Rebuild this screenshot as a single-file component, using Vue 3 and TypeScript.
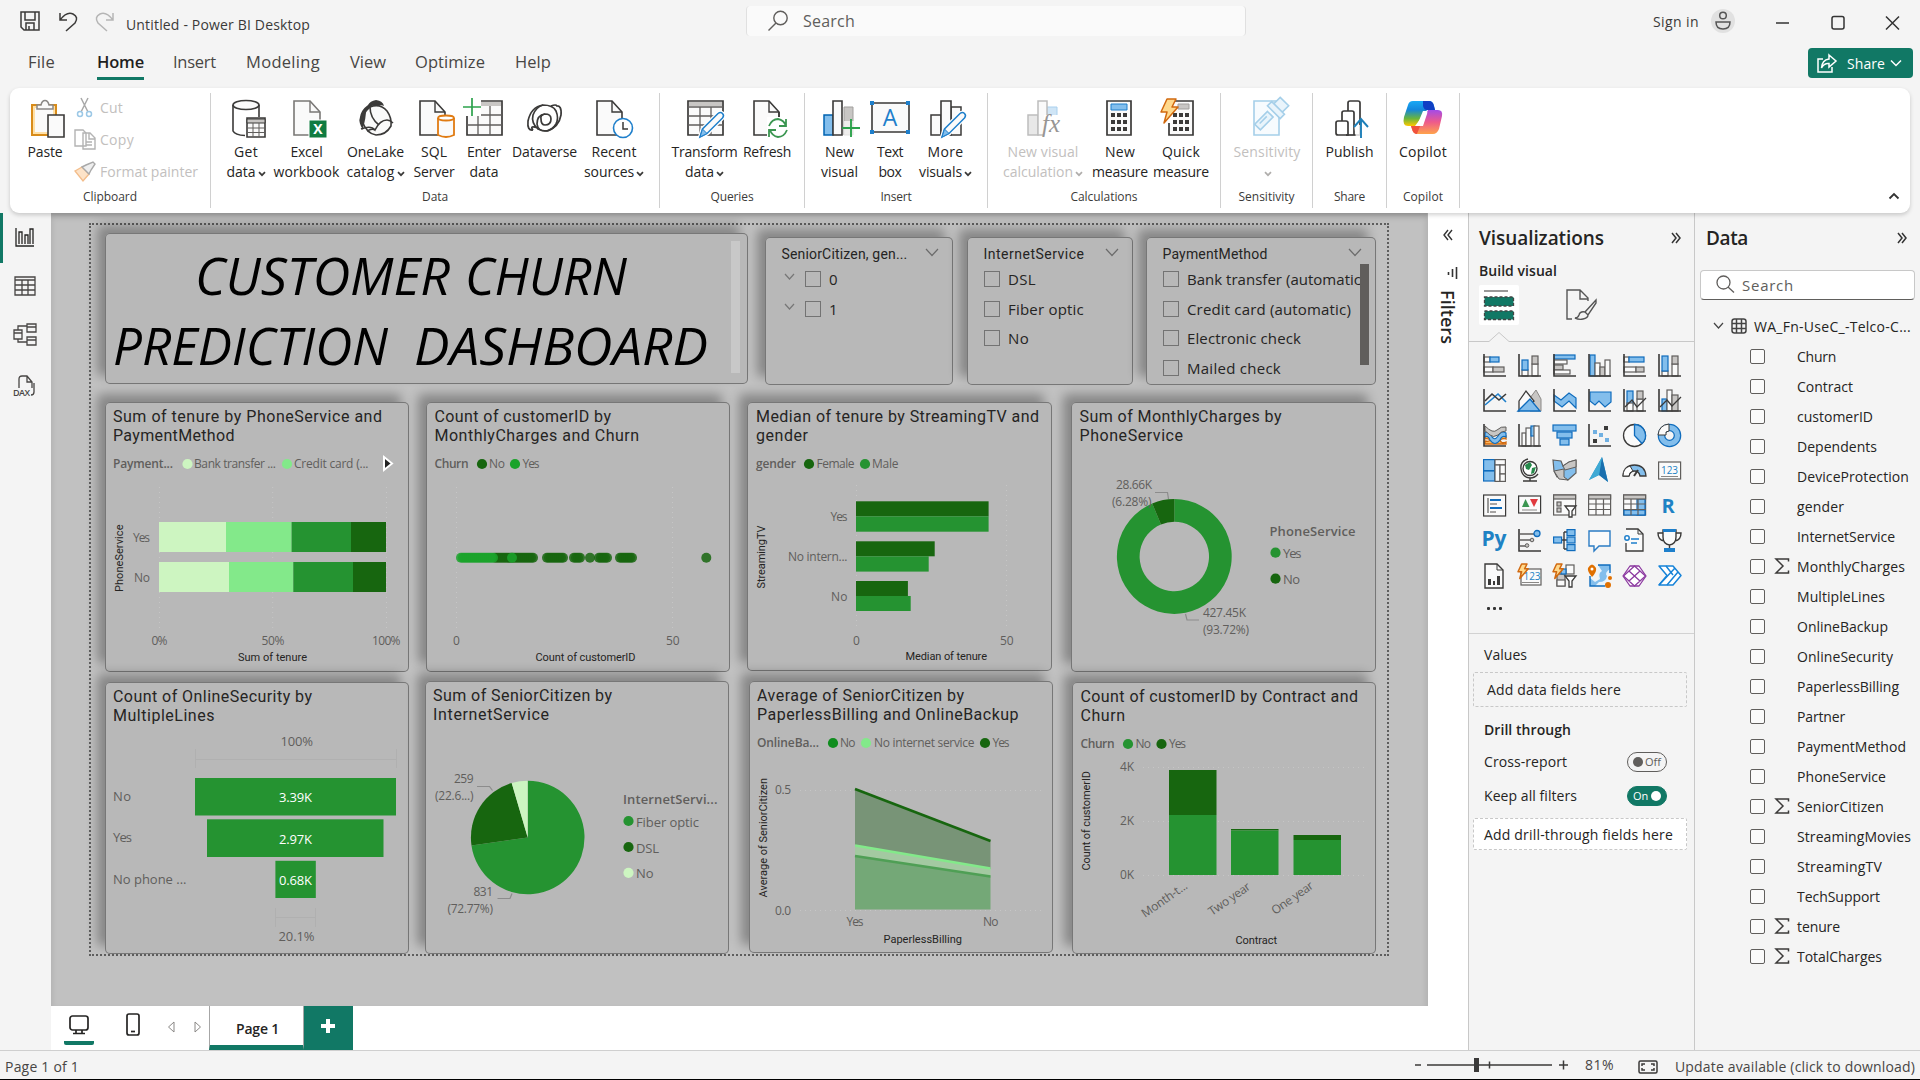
<script setup lang="ts">
type Label = [text: string, x: number, y: number, width: number, cls?: string, rotate?: number]
interface Visual { x: number; y: number; w: number; h: number; art: string; labels: Label[] }
interface Tool { icon: string; lines: [string, number][]; w: number; drop?: boolean; off?: boolean }
interface Group { name: string; nameW: number; w: number; pad: number; tools: Tool[] }

// Spreads a label over the given width by adjusting its tracking.
const vFit = {
  mounted(el: HTMLElement, b: { value: number }) {
    const n = (el.textContent || '').length
    const w = el.getBoundingClientRect().width
    if (n > 0 && b.value) el.style.letterSpacing = ((b.value - w) / n).toFixed(3) + 'px'
  },
}
const vFitVertical = {
  mounted(el: HTMLElement, b: { value: number }) {
    const n = (el.textContent || '').length
    const h = el.getBoundingClientRect().height
    el.style.letterSpacing = ((b.value - h) / n).toFixed(3) + 'px'
  },
}

const menu: [string, number, number][] = [
  ['File', 28, 27], ['Home', 42, 47], ['Insert', 29, 43], ['Modeling', 30, 74],
  ['View', 30, 36], ['Optimize', 29, 70], ['Help', 30, 36],
]

const D = '#3b3a39'
const pencil = (x: number, y: number) =>
  `<g transform="translate(${x} ${y})"><path d="M0 25l2.500-8L18 1.500q2.500-2 4.500 0t0 4.500L7 21.500z" fill="#fafafa" stroke="#fff" stroke-width="4"/><path d="M0 25l2.500-8L18 1.500q2.500-2 4.500 0t0 4.500L7 21.500z" fill="#fafafa" stroke="#1e7fcb" stroke-width="1.500"/><path d="M0 25l2.500-8 4.500 4.500z" fill="#83beec" stroke="#1e7fcb"/></g>`
const doc = (x: number, y: number, w: number, h: number, c = D) =>
  `<path d="M${x} ${y}h${w - 10}l10 11v${h - 11}h-${w}z" fill="#fafafa" stroke="${c}" stroke-width="1.600"/><path d="M${x + w - 10} ${y}v11h10" fill="none" stroke="${c}" stroke-width="1.400"/>`
const bolt = (x: number, y: number, s = 1) =>
  `<path transform="translate(${x} ${y}) scale(${s})" d="M6 0h9l-4 8h6L3 24l3-11H0z" fill="#ffd98c" stroke="#d1690f" stroke-width="${1.5 / s}" stroke-linejoin="round"/>`

const big: Record<string, string> = {
  paste: `<path d="M7 6h24v30H7z" fill="#ffe0a6" stroke="#d88c1a" stroke-width="2"/><path d="M10 9h18v24H10z" fill="#fafafa"/><path d="M12 10V6h4q1-4.500 4-4.500T24 6h4v4z" fill="#fafafa" stroke="#8a8886" stroke-width="1.500"/><path d="M23 16h16v22H23z" fill="#fafafa" stroke="${D}" stroke-width="1.600"/>`,
  getData: `<ellipse cx="20" cy="6" rx="13" ry="4.500" fill="#fafafa" stroke="${D}" stroke-width="1.600"/><path d="M7 6v26q2 4 12 4.500M33 6v12" fill="none" stroke="${D}" stroke-width="1.600"/><path d="M21 19h18v19H21z" fill="#fafafa" stroke="${D}" stroke-width="1.600"/><path d="M21 20h18v4H21z" fill="#c8c6c4" stroke="${D}"/><path d="M27 24v14M33 24v14M21 29h18M21 33.500h18" stroke="#605e5c"/>`,
  excel: doc(7, 2, 26, 34, '#7a7876') + `<path d="M22 21h18v18H22z" fill="#107c41" stroke="#fff"/><text x="31" y="35" text-anchor="middle" font-family="Open Sans,sans-serif" font-weight="700" font-size="14" fill="#fff">X</text>`,
  onelake: `<path d="M12 6Q14 2 20 1q7 1 8 6-2-1-8-1-8 0-12 13l-1 12Q2 23 4 18q1-7 8-12z" fill="${D}"/><path d="M6 22q1-8 8-14 10-4 17 4 5 7 4 15-5 9-15 9-9-1-14-14z" fill="#fafafa" stroke="${D}" stroke-width="1.600"/><path d="M14 8q0 11 9 18M5 30q10-4 14 1 5-10 12-10 3 0 6 3M11 32q5-3 8-1" fill="none" stroke="${D}" stroke-width="1.600"/><path d="M4 20q2-8 6-10 0 10-3 18-4-4-3-8z" fill="${D}"/>`,
  sql: doc(6, 2, 25, 34) + `<path d="M24 19v17q8 4 16 0V19" fill="#fafafa" stroke="#e07b12" stroke-width="1.800"/><ellipse cx="32" cy="19" rx="8" ry="2.500" fill="#fff" stroke="#e07b12" stroke-width="1.800"/>`,
  enter: `<path d="M3 2h35v34H3z" fill="#fafafa" stroke="${D}" stroke-width="1.700"/><path d="M15 3h22v4H15z" fill="#c8c6c4"/><path d="M14 7v29M26 7v29M3 16h35M3 26h35" stroke="#605e5c" stroke-width="1.300"/><path d="M0 0h17v17H0z" fill="#fff"/><path d="M8-1v18M-1 8h18" stroke="#2ca24c" stroke-width="1.700"/>`,
  dataverse: `<g fill="none" stroke="${D}" stroke-width="1.700"><path d="M8 31q-6 1-5-9Q6 8 18 6q10 0 13 6 3 7 0 13-4 7-11 7-7 0-8-7 0-9 8-10 6 0 6 5 0 6-6 6"/><path d="M31 7q6-1 5 9-2 12-14 16-5 0-9-2Q6 24 8 16q3-8 10-10M8 31q-4-5 5-2M26 7q5-2 6 0M20 15q-5 1-4 5 0 6 4 6"/></g>`,
  recent: doc(3, 2, 25, 34) + `<circle cx="29" cy="29" r="9.500" fill="#fff" stroke="#1e7fcb" stroke-width="1.600"/><path d="M29 23v7h5" fill="none" stroke="${D}" stroke-width="1.500"/>`,
  transform: `<path d="M3 2h35v34H3z" fill="#fafafa" stroke="${D}" stroke-width="1.700"/><path d="M4 3h33v4H4z" fill="#c8c6c4"/><path d="M3 8h35M15 8v28M26 8v28M3 17h35M3 26h35" stroke="#605e5c" stroke-width="1.300"/>` + pencil(15, 13),
  refresh: doc(7, 2, 25, 34) + `<path d="M20 18h20v22H20z" fill="#fff"/><path d="M22 27q3-7 9-7 6 1 8 7M39 20v7h-7M40 31q-3 7-9 7-6-1-8-7M22 38v-7h7" fill="none" stroke="#3b9651" stroke-width="1.800"/><path d="M32 18v-5" stroke="${D}" stroke-width="1.600"/>`,
  newVisual: `<path d="M24 8h9v28h-9z" fill="#c8c6c4" stroke="#a19f9d"/><path d="M4 16h9v20H4z" fill="#83beec" stroke="#0063b1" stroke-width="1.500"/><path d="M13 2h9v34h-9z" fill="#fafafa" stroke="${D}" stroke-width="1.600"/><path d="M24 22h15v16H24z" fill="#fff" opacity=".7"/><path d="M31 20v18M22 29h18" stroke="#2ca24c" stroke-width="1.900"/>`,
  textbox: `<path d="M2 4h37v29H2z" fill="#fafafa" stroke="${D}" stroke-width="1.600"/><path d="M0 2h4v4H0zM36 2h4v4h-4zM0 31h4v4H0zM36 31h4v4h-4z" fill="#1e7fcb"/><text x="20" y="27" text-anchor="middle" font-family="Open Sans,sans-serif" font-size="23" fill="#1e7fcb">A</text>`,
  more: `<path d="M25 8h10v28H25zM5 16h10v20H5z" fill="#fafafa" stroke="${D}" stroke-width="1.500"/><path d="M15 2h10v34H15z" fill="#fafafa" stroke="${D}" stroke-width="1.600"/>` + pencil(16, 13),
  visualCalc: `<path d="M24 8h10v10H24z" fill="#cfe5f6" stroke="#a9d0ee"/><path d="M5 16h10v20H5z" fill="#e8e8e8" stroke="#bdbdbd" stroke-width="1.500"/><path d="M15 2h9v34h-9z" fill="#fafafa" stroke="#bdbdbd" stroke-width="1.500"/><path d="M21 16h18v22H21z" fill="#fff"/><text x="19" y="33" font-family="Liberation Serif,serif" font-style="italic" font-size="25" fill="#979593">fx</text>`,
  calc: `<path d="M7 2h24v34H7z" fill="#fafafa" stroke="${D}" stroke-width="1.700"/><path d="M11 5h16v6H11z" fill="#83beec" stroke="#1e7fcb"/><path d="M11 14h4v4h-4zM17 14h4v4h-4zM23 14h4v4h-4zM11 21h4v4h-4zM17 21h4v4h-4zM23 21h4v4h-4zM11 28h4v4h-4zM17 28h4v4h-4zM23 28h4v4h-4z" fill="${D}"/>`,
  quick: `<path d="M8 2h24v34H8z" fill="#fafafa" stroke="${D}" stroke-width="1.700"/><path d="M17 5h11v5H17z" fill="#c8c6c4" stroke="#a19f9d"/><path d="M12 14h4v4h-4zM18 14h4v4h-4zM24 14h4v4h-4zM12 21h4v4h-4zM18 21h4v4h-4zM24 21h4v4h-4zM12 28h4v4h-4zM18 28h4v4h-4zM24 28h4v4h-4z" fill="${D}"/><path d="M-1-1h13v25H-1z" fill="#fff"/>` + bolt(0, 0),
  sensitivity: `<path d="M7 2h25v34H7z" fill="#f7fbfe" stroke="#a5cfe9" stroke-width="1.600"/><g transform="rotate(45 24 16)" fill="#e9f4fb" stroke="#a5cfe9" stroke-width="1.600"><path d="M18-3h12v9H18zM15 6h18v6H15z"/><path d="M19 16h8v18h-8zM22 20v10"/></g>`,
  publish: `<g fill="#fff" stroke="${D}" stroke-width="1.700"><path d="M18 35V4q0-2 2-2h8q2 0 2 2v32"/><path d="M12 36V14q0-2 2-2h8q2 0 2 2v22"/><path d="M6 34V24q0-2 2-2h8q2 0 2 2v12H8q-2 0-2-2z"/><path d="M16 36h14"/></g><path d="M24 26h14v13H26z" fill="#fff" opacity=".8"/><path d="M31 39V20m-7 8l7-8 7 8" fill="none" stroke="#1e7fb8" stroke-width="1.900"/>`,
  copilot: `<defs><linearGradient id="ca" x1="0" y1="0" x2="0" y2="1"><stop offset="0" stop-color="#18a9f5"/><stop offset=".35" stop-color="#1487dc"/><stop offset=".7" stop-color="#6ab53d"/><stop offset="1" stop-color="#ffc800"/></linearGradient><linearGradient id="cb" x1="0" y1="0" x2="0" y2="1"><stop offset="0" stop-color="#a34be8"/><stop offset=".5" stop-color="#ee5a8b"/><stop offset="1" stop-color="#ffa34b"/></linearGradient></defs><path d="M10 2h16q4 0 5 5l1 4h-8L12 27H5Q-1 27 1 18L5 6q1-4 5-4z" fill="url(#ca)"/><path d="M20 2h6q4 0 5 5l1 4h-8q-3 0-4-4z" fill="#0f3fc4"/><path d="M30 35H15q-5 0-6-5l-1-3h9l8-16h10q5 0 4 6l-3 13q-2 5-6 5z" fill="url(#cb)"/><path d="M8 27h9l-3 8q-4 0-5-5z" fill="#f0523d"/><path d="M20 12h3q2 0 1 3l-4 12h-4q-2 0-1-3z" fill="#fff"/>`,
}

const groups: Group[] = [
  { name: 'Data', nameW: 26, w: 449, pad: 9, tools: [
    { icon: 'getData', lines: [['Get', 24], ['data', 29]], w: 52, drop: true },
    { icon: 'excel', lines: [['Excel', 32], ['workbook', 66]], w: 69 },
    { icon: 'onelake', lines: [['OneLake', 57], ['catalog', 48]], w: 69, drop: true },
    { icon: 'sql', lines: [['SQL', 26], ['Server', 41]], w: 48 },
    { icon: 'enter', lines: [['Enter', 34], ['data', 29]], w: 52 },
    { icon: 'dataverse', lines: [['Dataverse', 65]], w: 69 },
    { icon: 'recent', lines: [['Recent', 45], ['sources', 50]], w: 70, drop: true } ] },
  { name: 'Queries', nameW: 43, w: 145, pad: 9, tools: [
    { icon: 'transform', lines: [['Transform', 66], ['data', 29]], w: 71, drop: true },
    { icon: 'refresh', lines: [['Refresh', 48]], w: 54 } ] },
  { name: 'Insert', nameW: 31, w: 183, pad: 9, tools: [
    { icon: 'newVisual', lines: [['New', 29], ['visual', 37]], w: 51 },
    { icon: 'textbox', lines: [['Text', 26], ['box', 23]], w: 50 },
    { icon: 'more', lines: [['More', 36], ['visuals', 43]], w: 61, drop: true } ] },
  { name: 'Calculations', nameW: 67, w: 233, pad: 8, tools: [
    { icon: 'visualCalc', lines: [['New visual', 71], ['calculation', 70]], w: 94, drop: true, off: true },
    { icon: 'calc', lines: [['New', 30], ['measure', 56]], w: 60 },
    { icon: 'quick', lines: [['Quick', 38], ['measure', 56]], w: 62 } ] },
  { name: 'Sensitivity', nameW: 56, w: 92, pad: 11, tools: [
    { icon: 'sensitivity', lines: [['Sensitivity', 67], ['', 0]], w: 70, drop: true, off: true } ] },
  { name: 'Share', nameW: 31, w: 74, pad: 2, tools: [{ icon: 'publish', lines: [['Publish', 48]], w: 69 }] },
  { name: 'Copilot', nameW: 40, w: 73, pad: 2, tools: [{ icon: 'copilot', lines: [['Copilot', 48]], w: 68 }] },
]

// ---- report visuals; drawn in report window coordinates ----
const G = '#259331', K = '#17660f', L = '#83e98a', P = '#cdf5c1'
const dot = (x: number, y: number, c: string) => `<circle cx="${x}" cy="${y}" r="5.100" fill="${c}"/>`
const rect = (x: number, y: number, x2: number, y2: number, c: string) =>
  `<rect x="${x}" y="${y}" width="${x2 - x}" height="${y2 - y}" fill="${c}"/>`
const dots = (x1: number, y1: number, x2: number, y2: number) =>
  `<path d="M${x1} ${y1}L${x2} ${y2}" stroke="#c6c6c6" stroke-dasharray="1 4" fill="none"/>`
const lead = (d: string) => `<path d="${d}" stroke="#8c8c8c" fill="none" stroke-width="1.200"/>`
const faint = (d: string) => `<path d="${d}" stroke="#b0b0b0" fill="none"/>`
const wedge = (cx: number, cy: number, R: number, r: number, a: number, b: number, c: string) => {
  const p = (rad: number, t: number) => `${(cx + rad * Math.sin(t)).toFixed(2)} ${(cy - rad * Math.cos(t)).toFixed(2)}`
  const s = a * 2 * Math.PI, e = b * 2 * Math.PI, big = b - a > 0.5 ? 1 : 0
  return `<path d="M${p(R, s)}A${R} ${R} 0 ${big} 1 ${p(R, e)}L${p(r, e)}A${r} ${r} 0 ${big} 0 ${p(r, s)}z" fill="${c}"/>`
}
const run = (a: number, b: number, c: string) => {
  let s = ''
  for (let x = a; x <= b + 0.01; x += 2) s += `<circle cx="${x}" cy="557.800" r="5" fill="${c}" fill-opacity=".85"/>`
  return s
}

const visuals: Visual[] = [
  { x: 105, y: 233, w: 643, h: 151,
    art: rect(731, 241, 740, 373, '#c8c8c8'),
    labels: [['CUSTOMER', 195, 294.5, 255, 'head'], ['CHURN', 465, 294.5, 162, 'head'],
      ['PREDICTION', 113, 364.5, 275, 'head'], ['DASHBOARD', 414, 364.5, 294, 'head']] },
  { x: 105, y: 402, w: 304, h: 270,
    art: dots(159.5, 487, 159.5, 630) + dots(272.7, 487, 272.7, 630) + dots(386.5, 487, 386.5, 630)
      + rect(159, 522, 226, 552, P) + rect(226, 522, 291.6, 552, L) + rect(291.6, 522, 351, 552, G) + rect(351, 522, 386, 552, K)
      + rect(159, 562, 229, 592, P) + rect(229, 562, 293.3, 592, L) + rect(293.3, 562, 353, 592, G) + rect(353, 562, 386, 592, K)
      + dot(187.5, 464, P) + dot(287, 464, L) + '<path d="M384 457l8 6.500-8 6.500z" fill="#222" stroke="#fff" stroke-width="2"/>',
    labels: [['Sum of tenure by PhoneService and', 113, 422.3, 269, 't'], ['PaymentMethod', 113, 441.3, 121.5, 't'],
      ['Payment...', 113, 468.3, 60, 'b'], ['Bank transfer ...', 194, 468.3, 82], ['Credit card (...', 294, 468.3, 74.5],
      ['Yes', 133, 542, 17], ['No', 134, 582, 16], ['0%', 151.5, 645.3, 16], ['50%', 261.5, 645.3, 23], ['100%', 372, 645.3, 28.5],
      ['Sum of tenure', 238, 661, 69, 'a'], ['PhoneService', 122.5, 592, 67.5, 'a', -90]] },
  { x: 426, y: 402, w: 304, h: 270,
    art: dots(456.5, 487, 456.5, 630) + dots(672.5, 487, 672.5, 630)
      + run(495, 533, K) + run(547, 563, K) + run(574, 580, K) + run(590, 590, K) + run(599, 607, K) + run(620, 633, K)
      + run(706.3, 706.3, K) + run(461, 493.5, '#1ba32b') + run(512, 512, '#1ba32b') + dot(482, 464, K) + dot(515, 464, '#1ba32b'),
    labels: [['Count of customerID by', 434.5, 422.3, 176.5, 't'], ['MonthlyCharges and Churn', 434.5, 441.3, 204.5, 't'],
      ['Churn', 434.5, 468.3, 34, 'b'], ['No', 489, 468.3, 16], ['Yes', 522.5, 468.3, 17], ['0', 453, 645.3, 7], ['50', 666, 645.3, 13.5],
      ['Count of customerID', 535.5, 661, 100, 'a']] },
  { x: 747, y: 402, w: 305, h: 269,
    art: dots(856.5, 485, 856.5, 630) + dots(1006.5, 485, 1006.5, 630)
      + rect(856, 501.3, 988.6, 516.3, K) + rect(856, 516.3, 988.6, 531.7, G)
      + rect(856, 541.3, 934.7, 556.3, K) + rect(856, 556.3, 928.7, 571.6, G)
      + rect(856, 581, 907.9, 596, K) + rect(856, 596, 910.7, 611, G) + dot(809, 464, K) + dot(865, 464, G),
    labels: [['Median of tenure by StreamingTV and', 756, 422.3, 283, 't'], ['gender', 756, 441.3, 52, 't'],
      ['gender', 756, 468.3, 40, 'b'], ['Female', 816.5, 468.3, 38], ['Male', 872, 468.3, 26.5], ['Yes', 830.5, 521.3, 17],
      ['No intern...', 788, 561.3, 59.5], ['No', 831, 601.3, 16.5], ['0', 853, 644.5, 7], ['50', 1000, 644.5, 13.5],
      ['Median of tenure', 905.5, 660, 81.5, 'a'], ['StreamingTV', 764.5, 588.5, 63, 'a', -90]] },
  { x: 1071, y: 402, w: 305, h: 270,
    art: wedge(1174.3, 556.5, 57.4, 34.7, 0, 0.9372, G) + wedge(1174.3, 556.5, 57.4, 34.7, 0.9372, 1, K)
      + lead('M1155 492.500h12.500l1 6.500') + lead('M1185.500 614l1.500 6h12') + dot(1275.5, 552.7, G) + dot(1275.5, 578.7, K),
    labels: [['Sum of MonthlyCharges by', 1079.5, 422.3, 202, 't'], ['PhoneService', 1079.5, 441.3, 103.5, 't'],
      ['28.66K', 1116, 489.3, 36], ['(6.28%)', 1112, 505.7, 39.5], ['427.45K', 1203, 617.3, 43], ['(93.72%)', 1203, 633.5, 46],
      ['PhoneService', 1269.5, 536, 86, 'b2'], ['Yes', 1283, 558.3, 18.5, 'm'], ['No', 1283, 584.3, 17, 'm']] },
  { x: 105, y: 682, w: 304, h: 272,
    art: rect(195, 778, 396, 815.5, G) + rect(207, 819.3, 383.5, 857, G) + rect(275.4, 860.8, 315.8, 898, G)
      + faint('M195.500 749v19M396.500 749v19M195 759.500h201') + faint('M275.500 908v19M315.500 908v19M275 917.500h41'),
    labels: [['Count of OnlineSecurity by', 113, 702.3, 199, 't'], ['MultipleLines', 113, 721.3, 101.5, 't'],
      ['100%', 280.5, 746, 32.5, 'm'], ['No', 113, 801.3, 18, 'm'], ['Yes', 113, 842.3, 19, 'm'], ['No phone ...', 113, 884, 73.5, 'm'],
      ['3.39K', 279, 802, 33, 'w'], ['2.97K', 279, 844, 33, 'w'], ['0.68K', 279, 885, 33, 'w'], ['20.1%', 278.5, 941, 36, 'm']] },
  { x: 425, y: 681, w: 304, h: 273,
    art: wedge(527.7, 837.5, 56.8, 0, 0, 0.7277, G) + wedge(527.7, 837.5, 56.8, 0, 0.7277, 0.9545, K) + wedge(527.7, 837.5, 56.8, 0, 0.9545, 1, P)
      + lead('M477 786.500h12.500l3 4') + lead('M497.500 898.500h12.500l2-5') + dot(628.5, 821, G) + dot(628.5, 847, K) + dot(628.5, 872.8, P),
    labels: [['Sum of SeniorCitizen by', 433, 701.3, 179, 't'], ['InternetService', 433, 720.3, 116, 't'],
      ['259', 454, 783.3, 19.5], ['(22.6...)', 435, 800.3, 38.5], ['831', 473.5, 896.3, 19.5], ['(72.77%)', 447.5, 912.5, 45.5],
      ['InternetServi...', 623, 804, 94.5, 'b2'], ['Fiber optic', 636, 826.7, 63, 'm'], ['DSL', 636, 852.5, 23, 'm'], ['No', 636, 877.7, 17.5, 'm']] },
  { x: 749, y: 681, w: 304, h: 272,
    art: dots(800, 790.5, 1044, 790.5) + dots(800, 910.5, 1044, 910.5)
      + '<path d="M855 789L990.500 841V869L855 845.500z" fill="#789477"/><path d="M855 845.500l135.500 23v8L855 856z" fill="#a3c9a1"/><path d="M855 856l135.500 20.500v33H855z" fill="#74a877"/>'
      + '<g fill="none" stroke-width="2.600"><path d="M855 856l135.500 20.500" stroke="#4f9f55"/><path d="M855 845.500l135.500 23" stroke="#83e98a"/><path d="M855 789l135.500 52" stroke="#17660f"/></g>'
      + dot(833, 743, '#108d1f') + dot(866, 743, L) + dot(985, 743, K),
    labels: [['Average of SeniorCitizen by', 757, 701.3, 207, 't'], ['PaperlessBilling and OnlineBackup', 757, 720.3, 261.5, 't'],
      ['OnlineBa...', 757, 747.3, 62, 'b'], ['No', 840, 747.3, 15.5], ['No internet service', 874, 747.3, 100.5], ['Yes', 992.5, 747.3, 17],
      ['0.5', 775, 794, 16], ['0.0', 775, 915, 16], ['Yes', 846.5, 926, 17], ['No', 983, 926, 15.5],
      ['PaperlessBilling', 883.5, 943, 78.5, 'a'], ['Average of SeniorCitizen', 766.5, 897.5, 119.5, 'a', -90]] },
  { x: 1072, y: 682, w: 304, h: 272,
    art: dots(1143, 767.5, 1368, 767.5) + dots(1143, 821.5, 1368, 821.5) + dots(1143, 875.5, 1368, 875.5)
      + rect(1169, 770, 1216.5, 815, K) + rect(1169, 815, 1216.5, 875, G) + rect(1231, 829, 1278.5, 830.5, K) + rect(1231, 830.5, 1278.5, 875, G)
      + rect(1293.5, 835, 1341, 840, K) + rect(1293.5, 840, 1341, 875, G) + dot(1128, 744, G) + dot(1161.5, 744, K),
    labels: [['Count of customerID by Contract and', 1080.5, 702.3, 277.5, 't'], ['Churn', 1080.5, 721.3, 44.5, 't'],
      ['Churn', 1080.5, 748.3, 34, 'b'], ['No', 1135.5, 748.3, 15.5], ['Yes', 1169, 748.3, 17],
      ['4K', 1120, 771.3, 14], ['2K', 1120, 825.3, 14], ['0K', 1120, 879.3, 14],
      ['Month-t...', 1145, 918, 53, '', -35], ['Two year', 1212, 916, 48, '', -35], ['One year', 1275, 915, 48, '', -35],
      ['Contract', 1235.5, 944, 41.5, 'a'], ['Count of customerID', 1089.5, 870.5, 99.5, 'a', -90]] },
]

interface Slicer { title: string; tw: number; x: number; y: number; w: number; h: number; tree?: boolean; scroll?: boolean; items: [string, number][] }
const slicers: Slicer[] = [
  { title: 'SeniorCitizen, gen...', tw: 126, x: 765, y: 237, w: 188, h: 148, tree: true, items: [['0', 9], ['1', 9]] },
  { title: 'InternetService', tw: 101, x: 967, y: 237, w: 166, h: 148, items: [['DSL', 28], ['Fiber optic', 76], ['No', 21]] },
  { title: 'PaymentMethod', tw: 105, x: 1146, y: 237, w: 230, h: 148, scroll: true,
    items: [['Bank transfer (automatic', 174], ['Credit card (automatic)', 164], ['Electronic check', 114], ['Mailed check', 94]] },
]
const place = (v: { x: number; y: number; w: number; h: number }) =>
  ({ left: v.x - 91 + 'px', top: v.y - 225 + 'px', width: v.w + 'px', height: v.h + 'px' })

// ---- visualization gallery ----
const B = '#83beec', S = '#0f6cbd', X = '#c8c6c4'
const ax = `<path d="M1 0v22h22" fill="none" stroke="${D}" stroke-width="1.600"/>`
const bx = (x: number, y: number, w: number, h: number, f = '#fafafa', s = '#605e5c') =>
  `<rect x="${x}" y="${y}" width="${w}" height="${h}" fill="${f}" stroke="${s}" stroke-width="1.200"/>`
const ln = (d: string, c = D, w = 1.3) => `<path d="${d}" fill="none" stroke="${c}" stroke-width="${w}"/>`
const word = (t: string, x: number, y: number, s: number, wt = 700) =>
  `<text x="${x}" y="${y}" text-anchor="middle" font-family="Open Sans,sans-serif" font-weight="${wt}" font-size="${s}" fill="#1e82c4">${t}</text>`
const funnel = '<path d="M12 12h11l-4 5v6h-3v-6z" fill="#fff" stroke="#3b3a39" stroke-width="1.300"/>'
const gallery: string[] = [
  bx(1, 3, 6, 5) + bx(7, 3, 9, 5, B, S) + bx(1, 13, 9, 5) + bx(10, 13, 11, 5, X) + ax,
  bx(4, 16, 6, 6) + bx(4, 6, 6, 10, B, S) + bx(14, 10, 6, 12) + bx(14, 2, 6, 8, X) + ax,
  bx(1, 1, 21, 4, B, S) + bx(1, 6, 13, 4) + bx(1, 11, 9, 5, X) + bx(1, 16, 16, 4) + ax,
  bx(2, 1, 5, 21, B, S) + bx(7, 9, 5, 13) + bx(12, 13, 5, 9, X) + bx(17, 6, 5, 16) + ax,
  bx(1, 3, 5, 5) + bx(6, 3, 15, 5, B, S) + bx(1, 13, 12, 5) + bx(13, 13, 8, 5, X) + ax,
  bx(4, 17, 6, 5) + bx(4, 2, 6, 15, B, S) + bx(14, 10, 6, 12) + bx(14, 2, 6, 8, X) + ax,
  ax + ln('M2 16L15 5l8 8', '#1e7fcb', 1.6) + ln('M2 12l7-7 7 6 7-6', D, 1.6),
  `<path d="M12 9l6-8 5 9v12H12z" fill="${X}" stroke="#8a8886"/><path d="M1 12L8 2l8 10-15 10z" fill="#fafafa" stroke="${D}" stroke-width="1.300"/><path d="M0 22l12-12 10 12z" fill="${B}" stroke="${S}" stroke-width="1.300"/>`,
  `<path d="M1 6l7 5 8-7 7 5v10l-7-7-7 6-8-6z" fill="${B}" stroke="${S}" stroke-width="1.200"/>` + ax,
  `<path d="M2 3h21v10l-6 5-6-6-4 4-5-4z" fill="${B}" stroke="${S}" stroke-width="1.200"/>` + ax,
  bx(4, 2, 6, 14, B, S) + bx(4, 14, 6, 8) + bx(14, 10, 6, 12) + bx(14, 2, 6, 8, X) + ax + ln('M2 18l7-7 5 7 9-9'),
  bx(4, 10, 5, 12, B, S) + bx(9, 1, 5, 21) + bx(14, 6, 6, 16, X) + ax + ln('M2 18l7-7 5 6 9-9'),
  `<path d="M2 12h6q4 8 9 0h6v3q-3-1-6 1 1 4 6 2v2H2v-3q4 1 5-1-2-2-5-1z" fill="#ffb659" stroke="#d1690f" stroke-width="1.300"/><path d="M2 9q4-3 6 2 3 7 7 1 3-6 8-3v4q-4-2-6 3-5 7-10 0-2-5-5-3z" fill="${B}" stroke="${S}" stroke-width="1.200"/><path d="M2 2q8 8 12 4t9-3v4q-5 0-8 4-5 3-8 0T2 7z" fill="${X}" stroke="#605e5c"/>` + ax,
  bx(4, 9, 4, 13) + bx(8, 4, 5, 18) + bx(13, 2, 4, 10, B, S) + bx(16, 2, 5, 20) + ax,
  bx(0, 1, 23, 6, B, S) + bx(4, 8, 15, 6, B, S) + bx(7, 15, 9, 6, B, S),
  ax + `<path d="M16 2h4v4h-4zM5 15h4v4H5z" fill="${D}"/><path d="M5 6h4v4H5zM11 9h4v4h-4zM17 14h4v4h-4z" fill="#70b0e2"/>`,
  `<circle cx="11.500" cy="11.500" r="11" fill="#fafafa" stroke="${D}" stroke-width="1.300"/><path d="M11.500.500a11 11 0 0 1 7.500 19l-7.500-8z" fill="${B}" stroke="${S}" stroke-width="1.300"/>`,
  `<circle cx="11.500" cy="11.500" r="8" fill="none" stroke="${S}" stroke-width="7.600"/><circle cx="11.500" cy="11.500" r="8" fill="none" stroke="${B}" stroke-width="5.200"/><path d="M0 11h8V8l3-1V0Q1 1 0 11z" fill="#fafafa" stroke="${D}"/>`,
  bx(0.6, 0.6, 11, 11, B, S) + bx(0.6, 12, 11, 10, B, S) + bx(12, 0.6, 10.4, 5.4) + bx(12, 6, 5, 16.4) + bx(17, 6, 5.4, 9) + bx(17, 15, 5.4, 7.4),
  `<circle cx="12" cy="9.500" r="7" fill="#fff" stroke="${D}" stroke-width="1.400"/><path d="M7 6l5-3 2 3-3 5-3-1zM14 9l4-1-2 6-3 1z" fill="#268a4b"/>` + ln('M10 0Q2 2 3 10t9 9q5 0 8-4M12 19v3M5 22h14', D, 1.4),
  `<path d="M0 1l8 1 2 5 6-4 7-2v13l-8 7-6-3H4L1 12z" fill="${B}" stroke="#605e5c" stroke-width="1.200"/><path d="M10 7l6-4 7-2v7l-11 3zM1 12l10-2v8l4 3-9-1z" fill="${X}" stroke="#605e5c"/>`,
  '<path d="M14-2l6 25-9-7-10 5z" fill="#279bd0"/><path d="M14-2l6 25-9-7z" fill="#1a6fae"/><path d="M14-2L1 21l10-5z" fill="#3fa9d4"/>',
  `<path d="M0 17Q1 6 11.500 6T23 17h-6q-1-5-5.500-5T6 17z" fill="${B}" stroke="${D}" stroke-width="1.300"/><path d="M0 17Q0 9 7 7l3 5q-4 1-4 5z" fill="#fff" stroke="${D}"/>` + ln('M11 17l4-6', D, 2),
  bx(0.6, 3, 22, 17) + word('123', 11.5, 15, 10, 400) + ln('M3 17.500h17', '#8a8886', 1),
  bx(0.6, 1, 22, 21, '#fafafa', D) + ln('M5 4v15', D, 1) + ln('M7 6h11M7 14h12', '#0f6cbd', 2) + ln('M7 10h7M7 18h6', '#8a8886', 1.4),
  bx(0.6, 2, 22, 17, '#fafafa', D) + '<path d="M4 13l3.500-8 4 8z" fill="#3b9651"/><path d="M12 5h8l-4 8z" fill="#e0393e"/>' + ln('M4 16h15', '#8a8886', 1),
  bx(0.6, 1, 22, 20) + bx(0.6, 1, 22, 4, X) + bx(4, 8, 4, 4, X) + bx(4, 14, 4, 4, X) + funnel,
  bx(0.6, 1, 22, 20) + bx(0.6, 1, 22, 4, X) + ln('M8 5v16M15.500 5v16M1 10h22M1 15.500h22', '#605e5c', 1.2),
  bx(0.6, 1, 22, 20) + bx(14, 5, 8, 16, B, S) + bx(1, 16, 21, 5, B, S) + bx(0.6, 1, 22, 4, X) + ln('M8 5v16M15 5v16M1 10h22M1 15.500h22', '#605e5c', 1.2),
  word('R', 10, 19, 20), word('Py', 11, 17, 21),
  ax + ln('M2 5h14M2 11h11M2 17h6', '#605e5c', 1.4) + `<circle cx="19" cy="4.500" r="3" fill="${B}" stroke="${S}" stroke-width="1.300"/><circle cx="14" cy="11" r="1.800" fill="${X}" stroke="#605e5c"/><circle cx="9" cy="16.500" r="1.800" fill="${X}" stroke="#605e5c"/>`,
  ln('M7 11h7M11 3v17M11 3h4M11 20h4', D, 1.4) + bx(0.6, 8, 8, 6, B, S) + bx(14, 0.6, 8, 6, B, S) + bx(14, 8, 8, 6, B, S) + bx(14, 15.6, 8, 6, B, S),
  `<path d="M1 2h21v15H11l-5 5v-5H1z" fill="#fafafa" stroke="#2b7cc4" stroke-width="1.400"/>`,
  `<path d="M3 0h12l5 5v17H3v-8" fill="#fafafa" stroke="${D}" stroke-width="1.300"/><path d="M15 0v5h5" fill="none" stroke="${D}"/><circle cx="4" cy="9" r="2.200" fill="#fff" stroke="#1e7fcb" stroke-width="1.500"/>` + ln('M8 10h8M8 14h6', '#1e7fcb', 1.3),
  `<path d="M5 1h13v7q0 7-6.500 8Q5 15 5 8zM5 4H0q0 7 6 8M18 4h5q0 7-6 8M11.500 16v4" fill="#fafafa" stroke="${D}" stroke-width="1.400"/><path d="M5 0h13v3H5zM6 19h11v4H6z" fill="#1e7fcb"/>`,
  `<path d="M2 0h12l6 6v18H2z" fill="#fafafa" stroke="${D}" stroke-width="1.400"/><path d="M14 0v6h6" fill="none" stroke="${D}"/><path d="M5 15h3v6H5zM10 17h2v4h-2zM14 12h3v9h-3z" fill="${D}"/>`,
  bx(3, 5, 20, 16) + word('123', 14, 16, 10, 400) + bolt(0, 0, 0.6) + ln('M4 18.500h17', '#8a8886', 1),
  bx(4, 10, 8, 12, X) + bx(13, 1, 8, 9) + bx(8, 5, 5, 5, B, S) + bx(4, 16, 8, 6) + bolt(0, 0, 0.6) + funnel,
  `<path d="M10 1h13v9h-3l-3 11H2V13l8 4z" fill="#e9f4fc"/><path d="M10 1h12v4q-6 4-3 7-1 6-8 6l-4 4H2v-8l5 4 5-3q-2-6 2-8z" fill="${B}"/><path d="M10 1h12v8M2 12v10h15" fill="none" stroke="${S}" stroke-width="1.400"/><path d="M4 13q-5-6-4-9 4-7 8 0 1 4-4 9zM17 21a3 3 0 1 1 6 0a3 3 0 1 1-6 0zM20 14a2 2 0 1 1 4 0a2 2 0 1 1-4 0z" fill="#e07000"/><circle cx="4" cy="5" r="1.500" fill="#fff"/>`,
  '<g fill="#fff" stroke="#8c3aa0" stroke-width="1.300" stroke-linejoin="round"><path d="M7 2h9l7 10-7 10H7L0 12z"/><path d="M11.500 2l5.500 5-5.500 5L6 7zM11.500 12l5.500 5-5.500 5L6 17zM6 7l5.500 5L6 17 .500 12zM17 7l5.500 5-5.500 5-5.500-5z"/></g>',
  '<g fill="#fff" stroke="#1683d8" stroke-width="1.500" stroke-linejoin="round"><path d="M1 2h14l8 9.500-8 9.500H1l8-9.500z"/><path d="M8 2l7 9M1 21L17 4M9 21L20 8" fill="none"/></g>',
]

const fields: [string, number, boolean?][] = [
  ['Churn', 39], ['Contract', 56], ['customerID', 76], ['Dependents', 80], ['DeviceProtection', 112], ['gender', 47],
  ['InternetService', 98], ['MonthlyCharges', 108, true], ['MultipleLines', 88], ['OnlineBackup', 91], ['OnlineSecurity', 96],
  ['PaperlessBilling', 102], ['Partner', 48], ['PaymentMethod', 109], ['PhoneService', 89], ['SeniorCitizen', 87, true],
  ['StreamingMovies', 114], ['StreamingTV', 85], ['TechSupport', 83], ['tenure', 43, true], ['TotalCharges', 85, true],
]
</script>

<template>
  <div class="app">
    <header class="titlebar">
      <svg class="save" width="20" height="20" viewBox="0 0 20 20"><path d="M1 1h18v18H4l-3-3zM5 1v8h10V1M6 19v-7h8v7M9 19v-4" /></svg>
      <svg class="undo" width="18" height="20" viewBox="0 0 18 20"><path d="M1 1v7h7M1 8Q8-1 14 2t2 9l-9 8" /></svg>
      <svg class="redo" width="18" height="20" viewBox="0 0 18 20"><path d="M17 1v7h-7M17 8Q10-1 4 2t-2 9l9 8" /></svg>
      <span v-fit="184" class="doc-title">Untitled - Power BI Desktop</span>
      <div class="top-search">
        <svg width="22" height="22" viewBox="0 0 22 22"><circle cx="13.500" cy="8" r="6.700" /><path d="M9 13l-7.500 7.500" /></svg>
        <span v-fit="52">Search</span>
      </div>
      <div class="account">
        <span v-fit="46">Sign in</span>
        <svg width="24" height="24" viewBox="0 0 24 24"><circle cx="12" cy="12" r="12" fill="#e1e1e1" stroke="none" /><circle cx="12" cy="6.500" r="3.300" /><path d="M5 13h14q0 7-7 7t-7-7z" /></svg>
      </div>
      <svg class="wins" width="126" height="16" viewBox="0 0 126 16"><path d="M1 8h13M111 1.500l13 13m0-13l-13 13" /><rect x="57" y="1.500" width="12" height="12.500" rx="2" /></svg>
    </header>

    <nav class="menu">
      <span v-for="m in menu" :key="m[0]" :class="{ on: m[0] === 'Home' }" :style="{ marginLeft: m[1] + 'px', width: m[2] + 'px' }"><i v-fit="m[2]">{{ m[0] }}</i></span>
      <button class="share">
        <svg width="20" height="19" viewBox="0 0 20 19"><path d="M6 5H1v13h14v-5M12 1l7 6-7 6V9.500Q7 9 4.500 14 5 6 12 5z" /></svg>
        <span v-fit="38">Share</span>
        <svg width="12" height="8" viewBox="0 0 12 8"><path d="M1 1.500l5 5 5-5" /></svg>
      </button>
    </nav>

    <section class="ribbon">
      <div class="group clip">
        <div class="tools">
          <div class="tool paste"><svg width="40" height="40" viewBox="0 0 40 40" v-html="big.paste" /><div class="cap"><span v-fit="35">Paste</span></div></div>
          <div class="small">
            <div><svg width="22" height="22" viewBox="0 0 22 22" fill="none"><path d="M7 1l7 14M14 1L7 15" stroke="#a9a9a9" stroke-width="1.500" /><circle cx="6" cy="17" r="2.500" stroke="#9cc8e6" stroke-width="1.500" /><circle cx="15" cy="17" r="2.500" stroke="#9cc8e6" stroke-width="1.500" /></svg><span v-fit="23">Cut</span></div>
            <div><svg width="22" height="22" viewBox="0 0 22 22" fill="#fafafa" stroke="#b3b3b3" stroke-width="1.400"><path d="M1 1h8l3 3v13H1z" /><path d="M9 4h7l5 5v11H9zM15 4v6h6M12 13h6M12 16h6" /></svg><span v-fit="34">Copy</span></div>
            <div><svg width="22" height="22" viewBox="0 0 22 22" stroke-width="1.400"><path d="M1 10l7-4 7 7-6 7z" fill="#fde3c8" stroke="#f3bd8b" /><path d="M8 6l4-2 7-3 2 2-4 6-2 4z" fill="#eee" stroke="#a9a9a9" /></svg><span v-fit="98">Format painter</span></div>
          </div>
        </div>
        <div class="gname"><span v-fit="54">Clipboard</span></div>
      </div>
      <div v-for="g in groups" :key="g.name" class="group" :style="{ width: g.w + 'px' }">
        <div class="tools" :style="{ paddingLeft: g.pad + 'px' }">
          <div v-for="t in g.tools" :key="t.icon" class="tool" :class="{ off: t.off }" :style="{ width: t.w + 'px' }">
            <svg width="40" height="40" viewBox="0 0 40 40" v-html="big[t.icon]" />
            <div v-for="(l, i) in t.lines" :key="i" class="cap">
              <span v-fit="l[1]">{{ l[0] }}</span>
              <svg v-if="t.drop && i === 1" class="chev" width="8" height="6" viewBox="0 0 8 6"><path d="M1 1.200l3 3 3-3" /></svg>
            </div>
          </div>
        </div>
        <div class="gname"><span v-fit="g.nameW">{{ g.name }}</span></div>
      </div>
      <svg class="collapse" width="12" height="8" viewBox="0 0 12 8"><path d="M1.500 6.500L6 2l4.500 4.500" /></svg>
    </section>

    <main class="body">
      <aside class="rail">
        <svg width="24" height="24" viewBox="0 0 24 24" class="on"><path d="M3 3v18h18M6 19v-12h3v12M12 19v-9h3v9M17 19V4h3v15" /></svg>
        <svg width="24" height="24" viewBox="0 0 24 24"><path d="M2 3h20v18H2zM2 6h20M2 11h20M2 16h20M9 6v15M15 6v15" /></svg>
        <svg width="24" height="24" viewBox="0 0 24 24"><path d="M14 1h9v8h-9zM14 4h9M14 14h9v8h-9zM14 17h9M1 7h8v9H1zM1 10h8M5 7V3h9M5 16v3h9" /></svg>
        <svg width="24" height="24" viewBox="0 0 24 24"><path d="M6 14V5q0-3 3-3h5l5 6v6M14 2v6h5M21 9v9q0 3-3 3" /><text x="0" y="22" textLength="17">DAX</text></svg>
      </aside>

      <div class="center">
        <div class="canvas">
          <div class="page">
            <div v-for="(v, i) in visuals" :key="i" class="visual" :style="place(v)">
              <svg :width="v.w" :height="v.h" :viewBox="`${v.x} ${v.y} ${v.w} ${v.h}`">
                <g v-html="v.art" />
                <text v-for="(l, k) in v.labels" :key="k" :x="l[1]" :y="l[2]" :textLength="l[3]" :class="l[4]"
                  :lengthAdjust="l[4] === 'head' ? 'spacingAndGlyphs' : 'spacing'"
                  :transform="l[5] ? `rotate(${l[5]} ${l[1]} ${l[2]})` : undefined">{{ l[0] }}</text>
              </svg>
            </div>
            <div v-for="s in slicers" :key="s.title" class="visual slicer" :class="{ tree: s.tree }" :style="place(s)">
              <div class="shead"><span v-fit="s.tw">{{ s.title }}</span><svg width="14" height="9" viewBox="0 0 14 9"><path d="M1 1l6 6.500L13 1" /></svg></div>
              <div class="slist">
                <div v-for="it in s.items" :key="it[0]" class="sitem">
                  <svg v-if="s.tree" width="11" height="8" viewBox="0 0 11 8"><path d="M1 1l4.500 5L10 1" /></svg>
                  <b /><span v-fit="it[1]">{{ it[0] }}</span>
                </div>
              </div>
              <div v-if="s.scroll" class="sbar" />
            </div>
          </div>
        </div>
        <div class="tabs">
          <div class="view on"><svg width="20" height="20" viewBox="0 0 20 20"><rect x="1" y="1" width="18" height="14" rx="2.500" /><path d="M7 15v3M13 15v3M4 18.500h12" /></svg></div>
          <div class="view phone"><svg width="14" height="23" viewBox="0 0 14 23"><rect x="1" y="1" width="12" height="21" rx="2" /><path d="M5 18.500h4" /></svg></div>
          <svg class="tri" width="8" height="12" viewBox="0 0 8 12"><path d="M7 1v10L1.500 6z" /></svg>
          <svg class="tri second" width="8" height="12" viewBox="0 0 8 12"><path d="M1 1v10l5.500-5z" /></svg>
          <div class="tab"><span v-fit="43">Page 1</span></div>
          <div class="add"><svg width="14" height="14" viewBox="0 0 14 14"><path d="M7 0v14M0 7h14" /></svg></div>
        </div>
      </div>

      <aside class="filters">
        <svg width="10" height="12" viewBox="0 0 10 12"><path d="M5 1L1 6l4 5M9 1L5 6l4 5" /></svg>
        <svg class="fi" width="12" height="14" viewBox="0 0 12 14"><path d="M10.500 1v12M6.500 3v8M2.500 6v3" /></svg>
        <span v-fit-vertical="54">Filters</span>
      </aside>

      <aside class="viz">
        <div class="ptitle"><span v-fit="125">Visualizations</span><svg width="10" height="12" viewBox="0 0 10 12"><path d="M1 1l4 5-4 5M5 1l4 5-4 5" /></svg></div>
        <div class="build"><span v-fit="78">Build visual</span></div>
        <div class="modes">
          <div class="mode"><svg width="32" height="32" viewBox="0 0 32 32"><path d="M1 2h24" stroke="#555" stroke-width="1.200" /><g fill="#117865" stroke="#444" stroke-width="1.300" stroke-dasharray="3 2"><rect x="1.500" y="8" width="29" height="9" /><rect x="1.500" y="22" width="29" height="8.500" /></g></svg></div>
          <svg class="fmt" width="32" height="32" viewBox="0 0 32 32"><path d="M6 30H1V1h13l8 8v3M14 1v9h8M30 11L19 23l3 3 8-12zM19 23q-5-1-6 3-1 3-4 3 4 2 8 1 5-1 5-4" /></svg>
        </div>
        <svg class="notch" width="226" height="12" viewBox="0 0 226 12"><path d="M0 10.500h20l10-9 10 9h186" /></svg>
        <div class="gallery">
          <svg v-for="(g, i) in gallery" :key="i" width="23" height="23" viewBox="0 0 23 23" v-html="g" />
        </div>
        <div class="dots"><i /><i /><i /></div>
        <div class="wells">
          <div class="wl"><span v-fit="43">Values</span></div>
          <div class="well"><span v-fit="134">Add data fields here</span></div>
          <div class="wl drill"><span v-fit="87">Drill through</span></div>
          <div class="wl tg"><span v-fit="83">Cross-report</span><div class="toggle"><i /><span v-fit="16">Off</span></div></div>
          <div class="wl tg keep"><span v-fit="93">Keep all filters</span><div class="toggle on"><span v-fit="15">On</span><i /></div></div>
          <div class="well white"><span v-fit="189">Add drill-through fields here</span></div>
        </div>
      </aside>

      <aside class="data">
        <div class="ptitle"><span v-fit="42">Data</span><svg width="10" height="12" viewBox="0 0 10 12"><path d="M1 1l4 5-4 5M5 1l4 5-4 5" /></svg></div>
        <div class="dsearch"><svg width="19" height="19" viewBox="0 0 19 19"><circle cx="7.500" cy="7.500" r="6.500" /><path d="M12 12l6 5.500" /></svg><span v-fit="52">Search</span></div>
        <div class="table">
          <svg width="11" height="8" viewBox="0 0 11 8"><path d="M1 1l4.500 5L10 1" /></svg>
          <svg class="ti" width="16" height="16" viewBox="0 0 16 16"><rect x="1" y="1" width="14" height="14" rx="2.500" /><path d="M5.500 1v14M10.500 1v14M1 5.500h14M1 10.500h14" /></svg>
          <span v-fit="157">WA_Fn-UseC_-Telco-C...</span>
        </div>
        <div v-for="f in fields" :key="f[0]" class="field">
          <b />
          <svg width="14" height="16" viewBox="0 0 14 16"><path v-if="f[2]" d="M13.500 3.500V1H1l7 7-7 7h12.500v-2.500" /></svg>
          <span v-fit="f[1]">{{ f[0] }}</span>
        </div>
      </aside>
    </main>

    <footer class="status">
      <span v-fit="74">Page 1 of 1</span>
      <div class="zoom">
        <svg width="154" height="16" viewBox="0 0 154 16"><path d="M1 8h6M13 8h125M145 8h9M149.500 3.500v9M75.500 4.500v7" /><path d="M60 1h5v14h-5z" class="thumb" /></svg>
        <span v-fit="29" class="pct">81%</span>
        <svg class="fitp" width="20" height="14" viewBox="0 0 20 14"><rect x="1" y="1" width="18" height="12" rx="1.500" /><path d="M4 6V4h3M13 4h3v2M16 8v2h-3M7 10H4V8" /></svg>
        <span v-fit="240">Update available (click to download)</span>
      </div>
    </footer>
  </div>
</template>

<style>
body { margin: 0; overflow: hidden; }
</style>

<style scoped>
* { box-sizing: border-box; }
.app { width: 1920px; height: 1080px; display: flex; flex-direction: column; background: #f4f4f4; font-family: "Open Sans", "Noto Sans", sans-serif; font-size: 14px; color: #252423; overflow: hidden; }
span, i { white-space: pre; font-style: normal; }
.app svg { flex: none; display: block; fill: none; overflow: visible; }

.titlebar { height: 44px; display: flex; align-items: flex-start; flex: none; }
.titlebar > svg { stroke: #3b3a39; stroke-width: 1.500; }
.save { margin: 11px 0 0 20px; }
.undo { margin: 12px 0 0 19px; }
.titlebar > .redo { margin: 12px 0 0 19px; stroke: #b5b5b5; }
.doc-title { margin: 15px 0 0 12px; line-height: 20px; color: #3b3a39; }
.top-search { margin: 6px 0 0 436px; width: 500px; height: 30px; background: #fafafa; border-radius: 4px; border-left: 1px solid #e0e0e0; border-right: 1px solid #e0e0e0; display: flex; align-items: center; padding-left: 20px; font-size: 16px; color: #605e5c; }
.top-search svg { stroke: #605e5c; stroke-width: 1.400; margin-right: 14px; }
.account { margin: 9px 0 0 407px; display: flex; align-items: center; justify-content: space-between; width: 82px; color: #3b3a39; height: 24px; }
.account svg { stroke: #555; stroke-width: 1.500; }
.titlebar > .wins { margin: 15px 0 0 40px; stroke: #333; stroke-width: 1.500; }

.menu { height: 44px; display: flex; flex: none; font-size: 16.500px; color: #484644; }
.menu > span { height: 36px; line-height: 36px; border-bottom: 3px solid transparent; }
.menu > span i { display: inline-block; }
.menu > .on { color: #1f1f1f; font-weight: 600; border-bottom-color: #117865; }
.share { margin: 4px 7px 0 auto; width: 105px; height: 30px; background: #117865; border: 0; border-radius: 4px; color: #fff; font: 14px "Open Sans", sans-serif; display: flex; align-items: center; padding: 0 0 0 9px; }
.share svg { stroke: #fff; stroke-width: 1.500; }
.share span { margin: 0 5px 0 10px; text-align: left; }

.ribbon { margin: 0 10px; height: 125px; background: #fff; border-radius: 9px; display: flex; flex: none; position: relative; z-index: 5; box-shadow: 0 2px 4px rgba(0, 0, 0, .18); }
.group { height: 115px; margin-top: 5px; border-right: 1px solid #d0d0d0; flex: none; display: flex; flex-direction: column; }
.clip { width: 201px; }
.tools { display: flex; height: 95px; }
.tool { padding-top: 6px; display: flex; flex-direction: column; align-items: center; flex: none; }
.paste { width: 54px; margin-left: 8px; }
.cap { height: 20px; line-height: 20px; margin-bottom: 0; display: flex; align-items: center; justify-content: center; }
.tool > svg + .cap { margin-top: 3px; }
.chev { stroke: #3b3a39; stroke-width: 1.700; margin: 3px 0 0 2px; }
.off { color: #c2c0be; }
.off .chev { stroke: #b0aeac; }
.small { margin-left: 2px; padding-top: 4px; color: #c2c0be; }
.small > div { display: flex; align-items: center; height: 22px; margin-bottom: 10px; }
.small span { margin-left: 4px; margin-top: -1px; }
.gname { font-size: 12px; line-height: 17px; text-align: center; color: #3b3a39; }
.collapse { stroke: #333; stroke-width: 1.800; position: absolute; right: 10px; top: 104px; }

.body { flex: 1; display: flex; min-height: 0; }
.rail { width: 51px; flex: none; display: flex; flex-direction: column; padding: 12px 0 0 13px; gap: 25.500px; position: relative; }
.rail::before { content: ""; position: absolute; left: 0; top: 0; width: 3px; height: 50px; background: #117865; }
.rail svg { stroke: #484644; stroke-width: 1.300; }
.rail svg.on { stroke: #252423; }
.rail svg:nth-child(2) { margin-top: -1px; }
.rail svg:nth-child(4) { margin-top: 1px; }
.rail text { font: 600 9px "Open Sans", sans-serif; fill: #484644; stroke: none; }
.center { width: 1377px; flex: none; display: flex; flex-direction: column; }
.canvas { height: 793px; background: #c1c1c1; padding: 10px 0 0 38px; overflow: hidden; border-right: 1px solid #b5b5b5; box-shadow: inset 0 4px 6px rgba(0, 0, 0, .12); }
.page { width: 1300px; height: 733px; border: 2px dotted #5e5e5e; position: relative; }
.visual { position: absolute; background: #b8b8b8; border-radius: 5px; box-shadow: 0 0 0 1px #777 inset, -8px -8px 11px 0 rgba(0, 0, 0, .3); }
.visual text { font: 12px "Open Sans", sans-serif; fill: #605e5c; white-space: pre; }
.visual text.m { font-size: 13px; }
.visual text.w { font-size: 13px; fill: #fff; }
.visual text.b { font-weight: 600; }
.visual text.b2 { font-weight: 600; font-size: 13px; }
.visual text.t { font: 16px Roboto, sans-serif; fill: #252423; }
.visual text.a { font: 11px Roboto, sans-serif; fill: #252423; }
.visual text.head { font: italic 52px "Open Sans", sans-serif; font-weight: 400; fill: #000; }

.slicer { padding: 7px 16px 0 16.500px; }
.shead { display: flex; justify-content: space-between; height: 20px; align-items: center; font: 14px Roboto, sans-serif; margin-right: -2px; }
.shead svg { stroke: #6b6b6b; stroke-width: 1.200; margin-top: -4px; }
.slist { margin-top: 0; }
.sitem { display: flex; height: 29.700px; align-items: center; font-size: 15px; }
.sitem svg { stroke: #777; stroke-width: 1.200; margin: -4px 10px 0 2px; }
.sitem b { width: 16px; height: 16px; border: 1px solid #737373; margin-right: 8.500px; flex: none; }
.sbar { position: absolute; right: 7px; top: 27px; width: 9px; height: 101px; background: #605e5c; }

.tabs { height: 44px; display: flex; background: #fff; }
.view { width: 30px; margin-left: 13px; height: 39px; padding: 9px 0 0 5px; border-bottom: 4px solid transparent; }
.view.on { border-bottom-color: #117865; border-radius: 0 0 2px 2px; }
.view svg { stroke: #252423; stroke-width: 1.700; }
.view.phone { padding: 7px 0 0 0; margin-left: 32px; width: 14px; }
.tri { stroke: #8a8886; margin: 15px 0 0 27px; }
.tri.second { margin-left: 19px; }
.tab { width: 95px; margin-left: 7px; border-left: 1px solid #a6a6a6; border-right: 1px solid #a6a6a6; border-bottom: 5px solid #117865; font-weight: 600; font-size: 14px; padding: 13px 0 0 26px; line-height: 20px; }
.add { width: 49px; background: #117865; padding: 13px 0 0 17px; }
.add svg { stroke: #fff; stroke-width: 4; }

.filters { width: 40px; background: #fff; flex: none; padding: 16px 0 0 15px; }
.filters > svg { stroke: #333; stroke-width: 1.400; }
.filters > .fi { margin: 25px 0 0 3px; stroke-width: 1.600; }
.filters span { display: inline-block; writing-mode: vertical-rl; font-size: 18px; font-weight: 600; line-height: 20px; margin: 10px 0 0 -5px; }

.viz { width: 226px; flex: none; border-left: 1px solid #c8c8c8; }
.ptitle { display: flex; justify-content: space-between; align-items: center; font-size: 19px; font-weight: 600; height: 26px; margin: 12px 13px 0 10px; }
.ptitle svg { stroke: #333; stroke-width: 1.500; }
.build { margin: 9px 0 0 10px; font-size: 14px; font-weight: 600; line-height: 22px; height: 22px; }
.modes { display: flex; height: 46px; margin: 3px 0 0 10px; }
.mode { width: 40px; height: 40px; background: #fff; padding: 4px; border-radius: 2px; }
.fmt { margin: 4px 0 0 47px; stroke: #555; stroke-width: 1.400; }
.notch { stroke: #c8c8c8; }
.gallery { display: grid; grid-template-columns: repeat(6, 23px); gap: 12px; padding: 11px 0 0 14px; }
.dots { display: flex; gap: 3px; padding: 20px 0 0 18px; height: 47px; border-bottom: 1px solid #d2d2d2; }
.dots i { width: 3px; height: 3px; background: #333; border-radius: 1px; }
.wells { padding: 10px 7px 0 4px; font-size: 14px; }
.wl { height: 22px; line-height: 22px; padding-left: 11px; }
.well { height: 35px; border: 1px dashed #c8c8c8; border-radius: 2px; margin-top: 6px; display: flex; align-items: center; padding-left: 13px; }
.drill { margin-top: 12px; font-weight: 600; }
.tg { display: flex; justify-content: space-between; align-items: center; padding-right: 20px; margin-top: 10px; }
.keep { margin-top: 12px; }
.toggle { width: 40px; height: 20px; border: 1px solid #605e5c; border-radius: 10px; display: flex; align-items: center; justify-content: space-between; padding: 0 5px; font-size: 11px; color: #605e5c; }
.toggle i { width: 10px; height: 10px; border-radius: 5px; background: #605e5c; }
.toggle.on { background: #117865; border-color: #117865; color: #fff; }
.toggle.on i { background: #fff; }
.well.white { height: 32px; background: #fff; padding-left: 10px; margin-top: 11px; }

.data { flex: 1; border-left: 1px solid #c8c8c8; }
.data .ptitle { margin-left: 11px; }
.dsearch { margin: 19px 5px 0 5px; height: 30px; background: #fff; border: 1px solid #c8c8c8; border-bottom-color: #605e5c; border-radius: 4px; display: flex; align-items: center; padding-left: 15px; font-size: 15px; color: #605e5c; }
.dsearch svg { stroke: #605e5c; stroke-width: 1.300; margin: -2px 7px 0 0; }
.table { display: flex; align-items: center; height: 30px; margin-top: 11px; padding-left: 18px; font-size: 14px; }
.table svg { stroke: #444; stroke-width: 1.200; }
.table .ti { margin: 0 7px; stroke-width: 1.500; }
.field { display: flex; align-items: center; height: 30px; padding-left: 55px; font-size: 14px; }
.field b { width: 15px; height: 15px; border: 1px solid #605e5c; border-radius: 2px; background: #fafafa; }
.field svg { stroke: #3b3a39; stroke-width: 1.500; margin: 0 8px 0 10px; }

.status { height: 30px; flex: none; border-top: 1px solid #cfcfcf; border-bottom: 1px solid #000; display: flex; justify-content: space-between; align-items: center; padding: 3px 5px 0 5px; color: #484644; font-size: 14px; }
.zoom { display: flex; align-items: center; }
.zoom > svg { stroke: #3b3a39; stroke-width: 1.500; margin-top: -4px; }
.thumb { fill: #3b3a39; stroke: none; }
.pct { margin: -4px 24px 0 17px; }
.zoom > .fitp { margin-right: 17px; margin-top: 0; }
</style>
